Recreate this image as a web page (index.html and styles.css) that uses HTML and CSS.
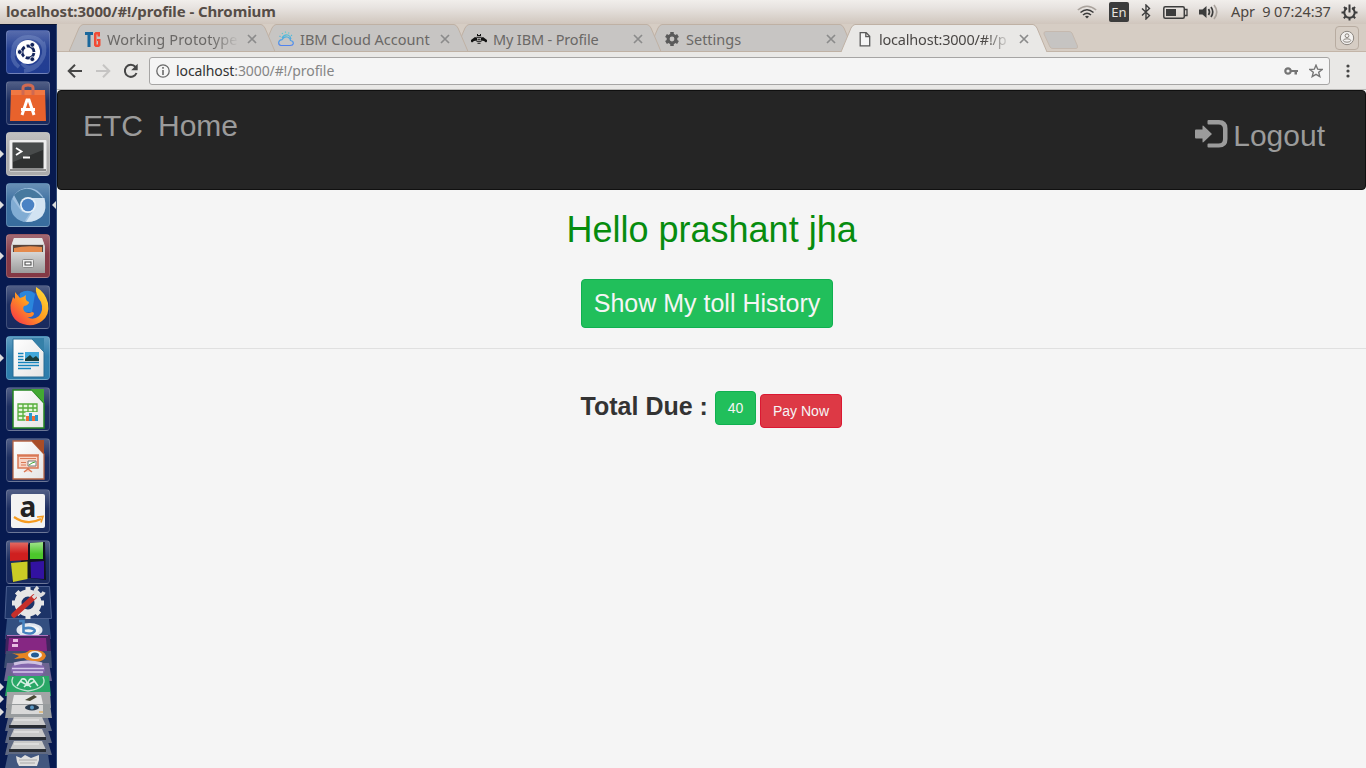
FILE: index.html
```html
<!DOCTYPE html>
<html lang="en">
<head>
<meta charset="utf-8">
<title>localhost:3000/#!/profile</title>
<link rel="stylesheet" href="styles.css">
</head>
<body>
<svg width="0" height="0" class="defs">
  <defs>
    <linearGradient id="paper" x1="0" y1="0" x2="1" y2="1"><stop offset="0" stop-color="#fff"/><stop offset="1" stop-color="#e4e4e4"/></linearGradient>
    <linearGradient id="cloud" x1="0" y1="0" x2="0" y2="1"><stop offset="0" stop-color="#53d1cf"/><stop offset="1" stop-color="#5183ef"/></linearGradient>
    <linearGradient id="fox" x1="1" y1="0" x2="0" y2="1"><stop offset="0" stop-color="#ffe73b"/><stop offset=".5" stop-color="#ff9a20"/><stop offset="1" stop-color="#f6244f"/></linearGradient>
    <linearGradient id="metal" x1="0" y1="0" x2="0" y2="1"><stop offset="0" stop-color="#d6d6d6"/><stop offset="1" stop-color="#9c9c9c"/></linearGradient>
    <linearGradient id="cubeR" x1="0" y1="0" x2="0" y2="1"><stop offset="0" stop-color="#e26a62"/><stop offset=".6" stop-color="#cf1f1f"/></linearGradient>
    <linearGradient id="cubeG" x1="0" y1="0" x2="0" y2="1"><stop offset="0" stop-color="#a2e38d"/><stop offset=".7" stop-color="#4cc72c"/></linearGradient>
    <path id="x" d="M1 1L9 9M9 1L1 9" stroke="#8b8b8b" stroke-width="1.7" fill="none"/>
  </defs>
</svg>
<div class="desktop">
  <header class="panel">
    <span class="panel-title">localhost:3000/#!/profile - Chromium</span>
    <div class="indicators">
      <svg class="wifi" width="20" height="14" viewBox="0 0 20 14" fill="none" stroke-width="1.5"><path d="M.8 5Q10-2.500 19.200 5" stroke="#aaa39d"/><path d="M3.500 7.500Q10 2 16.500 7.500M6 10Q10 6.500 14 10" stroke="#3c3c3c"/><path d="M8 11.500Q10 10 12 11.500L10 13.500Z" fill="#3c3c3c"/></svg>
      <span class="lang">En</span>
      <svg class="bt" width="10" height="16" viewBox="0 0 10 16" fill="none" stroke="#3c3c3c" stroke-width="1.400"><path d="M1 4.500L8.500 11.500L5 15V1L8.500 4.500L1 11.500"/></svg>
      <svg class="battery" width="25" height="13" viewBox="0 0 25 13"><rect x=".8" y=".8" width="20.500" height="11.400" rx="1.500" fill="none" stroke="#3c3c3c" stroke-width="1.500"/><rect x="3" y="3" width="10" height="7" fill="#3c3c3c"/><path d="M22 3.500h2v6h-2" fill="none" stroke="#3c3c3c" stroke-width="1.300"/></svg>
      <svg class="sound" width="20" height="16" viewBox="0 0 20 16" fill="none" stroke-width="1.700"><path d="M0 5.500h3.500L7.500 2v12L3.500 10.500H0z" fill="#3c3c3c"/><path d="M9.500 5Q11.500 8 9.500 11M12 3Q15.500 8 12 13" stroke="#3c3c3c"/><path d="M15 1Q20.500 8 15 15" stroke="#aaa39d"/></svg>
      <time class="clock">Apr&nbsp; 9 07:24:37</time>
      <svg class="power" width="17" height="17" viewBox="-8.500 -8.500 17 17" fill="none" stroke="#3c3c3c"><path d="M-2.500-4.500A5.200 5.200 0 1 0 2.500-4.500" stroke-width="2"/><path d="M0-8V0M5.500-5.500L4-4M8 0H5.500M5.700 5.700L4 4M0 8V5.500M-5.700 5.700L-4 4M-8 0H-5.500M-5.500-5.500L-4-4" stroke-width="2"/></svg>
    </div>
  </header>

  <nav class="launcher">
    <div class="tile t-dash"><svg viewBox="0 0 44 44"><g fill="none" stroke="#91a8d7" stroke-opacity=".32" stroke-width="4"><path d="M8 26C4 12 16 3 32 9M37 12C42 26 32 40 18 41M13 37C2 29 7 14 15 10M24 7C38 8 42 22 34 32M16 33C22 42 34 36 37 26"/></g><circle cx="22" cy="22" r="12" fill="#fff"/><circle cx="22" cy="22" r="6" fill="none" stroke="#14255c" stroke-width="2.800" stroke-dasharray="10.560 2" stroke-dashoffset="-1"/><g fill="#14255c" stroke="#fff" stroke-width=".8"><circle cx="13.700" cy="22" r="2.400"/><circle cx="26.300" cy="14.800" r="2.400"/><circle cx="26.300" cy="29.200" r="2.400"/></g></svg></div>
    <div class="tile t-plain"><svg viewBox="0 0 44 44"><path d="M5 9h34l1 31H4z" fill="#e8622c"/><path d="M5 9h34v5H5z" fill="#f07843"/><path d="M17 14V7q0-3 5-3t5 3v7" fill="none" stroke="#cf6951" stroke-width="3"/><path d="M16 34L21 19h2l5 15M15 28.500h14" fill="none" stroke="#fff" stroke-width="3"/></svg></div>
    <div class="tile t-term running"><svg viewBox="0 0 44 44"><rect x="3.500" y="8" width="37" height="31.500" rx="1" fill="#eee"/><path d="M4 37h36v2H4z" fill="#8c8c8c"/><rect x="6.500" y="10.500" width="31" height="26" fill="#2e3030"/><path d="M7 11h30v7L7 30z" fill="#484b4b"/><path d="M10 16l5.500 3.500-5.500 3.500M17 25.500h7" stroke="#fff" stroke-width="1.800" fill="none"/></svg></div>
    <div class="tile t-chrome running focused"><svg viewBox="0 0 44 44"><circle cx="22" cy="22" r="17" fill="#9fc0e0"/><path d="M8 12Q22-2 37 15H22L15 25z" fill="#47799f"/><path d="M6 15L16 29 24 30 18 39Q1 34 6 15z" fill="#81acd3"/><path d="M38.500 15H26Q31 24 25 31l-5 8Q44 38 38.500 15z" fill="#d2e3f2"/><circle cx="22" cy="22" r="8" fill="#e6f0f9"/><circle cx="22" cy="22" r="6.300" fill="#4a82c4"/></svg></div>
    <div class="tile t-files running"><svg viewBox="0 0 44 44"><path d="M8 4h28l3 8v27H5V12z" fill="#cfcfcf"/><path d="M8 4h28l2 6H6z" fill="#e6e6e6"/><rect x="7" y="11" width="30" height="8" fill="#59443a"/><path d="M8 14q12-3 28-1v6H8z" fill="#e58a4c"/><path d="M5 18h34v21H5z" fill="url(#metal)"/><rect x="16.500" y="25.500" width="11" height="8" rx="1" fill="#eee" stroke="#888"/><rect x="19" y="28" width="6" height="3" fill="#fff" stroke="#444"/></svg></div>
    <div class="tile t-plain"><svg viewBox="0 0 44 44"><circle cx="22" cy="22" r="16" fill="#2361c4"/><path d="M14 8q9-5 15 1l-3 18H14z" fill="#2a86dc"/><path d="M4.500 20L7 12l2 2V7l5 6q4-1 6-3-1 4 1 6l2 1q0 3-5 4-2 3 1 6 4 2 7 0 2 0 2 2-2 4-7 3 6 4 12-1 5-6 2-14-6-8-5-15 9 5 12 16 2 12-6 18-6 5-15 4Q4 37 4.500 20z" fill="url(#fox)"/></svg></div>
    <div class="tile t-writer running"><svg viewBox="0 0 44 44"><path d="M7 3h19l12 13v25H7z" fill="url(#paper)" stroke="#286d94"/><path d="M25 2h13v14z" fill="#3580a8"/><path d="M12 17.500h5.500M12 20.500h5.500M12 23.500h5.500M12 26.500h21M12 29.500h21M12 32.500h13" stroke="#1685bd" stroke-width="1.400"/><rect x="19" y="16" width="14" height="9" fill="#41a8db"/><path d="M19 25v-2l5-4 3 3 3-2 3 3v2z" fill="#193e3c"/></svg></div>
    <div class="tile t-plain"><svg viewBox="0 0 44 44"><path d="M7 3h19l12 13v25H7z" fill="url(#paper)" stroke="#238520" stroke-width="1.500"/><path d="M25 2h13v14z" fill="#43a833"/><path d="M12 17h19v16H12zM12 21h19M12 25h19M12 29h19M17 17v16M22 17v16M27 17v16" stroke="#55ad3a" fill="#e5f7dc" stroke-width="1.300"/><rect x="19.500" y="25" width="12.500" height="9" fill="#eee"/><path d="M20 29h3v5h-3zM26 29h3v5h-3z" fill="#ec6c38"/><path d="M23 26h3v8h-3zM29 28h3v6h-3z" fill="#2798ce"/></svg></div>
    <div class="tile t-plain"><svg viewBox="0 0 44 44"><path d="M7 3h19l12 13v25H7z" fill="url(#paper)" stroke="#b76545" stroke-width="1.300"/><path d="M25 2h13v14z" fill="#a84d27"/><path d="M12 18h20v12H12zM18 34l4-3 4 3M11 17h22" stroke="#d97855" fill="#f9d5c6" stroke-width="1.500"/><path d="M14 20.500h16M15 24.500h5M15 27h5" stroke="#d97855"/><path d="M22 23h8v5h-8z" fill="#fff" stroke="#777"/><path d="M23 27l3-2 3-1" stroke="#43a833" fill="none"/></svg></div>
    <div class="tile t-plain"><svg viewBox="0 0 44 44"><rect x="5" y="5" width="34" height="34" rx="2" fill="#f3f3f3"/><text x="13.500" y="28" class="amz">a</text><path d="M8 28q13 9 27 2" fill="none" stroke="#f59b20" stroke-width="2.200"/><path d="M31 28l6-.5-2 6" fill="none" stroke="#f59b20" stroke-width="1.600"/></svg></div>
    <div class="tile t-plain"><svg viewBox="0 0 44 44"><path d="M23 3l16-1 1 38-17-2-17 4z" fill="#101421"/><path d="M4 2.500h18V20L4 21z" fill="url(#cubeR)"/><path d="M24 3l13-1v17H24z" fill="url(#cubeG)"/><path d="M5 23l16.500-1.500V39L7 42z" fill="#cbcb25"/><path d="M24.500 22l13.500-1v18l-13-1z" fill="#3212a1"/></svg></div>
    <svg class="stack" viewBox="0 0 57 184">
      <path d="M6.500 2.500h43l2 32H5z" fill="#1d3468" stroke="#4c6090"/>
      <g transform="translate(28 19)"><circle r="10" fill="none" stroke="#e6e6e6" stroke-width="7"/><path d="M-2.500-13h5M-2.500 13h5M-13-2.500v5M13-2.500v5M-11-7.500l3.500-3.500M11 7.500l-3.500 3.500M-11 7.500l3.500 3.500M11-7.500l-3.500-3.500" stroke="#e6e6e6" stroke-width="6"/><path d="M-14 12L6-6" stroke="#c62f2a" stroke-width="5.500" stroke-linecap="round"/><path d="M5-5l5-5M10-16q-5 5-1 7 5 3 7-2" stroke="#ddd" stroke-width="3.500" fill="none"/></g>
      <path d="M7 35h42l2 20H5z" fill="#334f80"/><ellipse cx="29.500" cy="46" rx="13" ry="7" fill="#dfe6ee"/><ellipse cx="29.500" cy="46" rx="10" ry="4.500" fill="#f3f5f7"/><path d="M19 37h4.500v11q4 2.500 9 1 4-2 1-4-4-2-10-.5" fill="none" stroke="#4582bd" stroke-width="2.600"/>
      <path d="M6 51h44l1 19H5z" fill="#41245e"/><path d="M9 54h37l1 13H8z" fill="#862783"/><path d="M13 55h5v3h-5zM12 60h6v3h-6z" fill="#e9bde2"/><path d="M7 51.500h41" stroke="#af74bd"/>
      <path d="M6 67h45l1 17H4z" fill="#405172" fill-opacity=".9"/><path d="M12 69q13 2 18-3 15-1 16 6-3 8-16 5-4-1-6-3l-10 1 5-3z" fill="#e88522"/><ellipse cx="35" cy="71" rx="7" ry="4" fill="#eee"/><ellipse cx="35" cy="71" rx="4" ry="2.500" fill="#255b93"/>
      <path d="M7 79h42l3 18H4z" fill="#6d6591"/><ellipse cx="28" cy="85.500" rx="17" ry="9" fill="#8467ae"/><path d="M12 84.500h32M13 88h30" stroke="#d7c9eb" stroke-width="1.400"/><path d="M14 80q14-4 28 0" stroke="#cdc0e0" stroke-width="3" fill="none"/>
      <path d="M8 92h41l2 20H5z" fill="#29a766"/><path d="M13 93q-5 11 15 14 20-3 15-14" fill="none" stroke="#b9e2ce" stroke-width="1.400"/><path d="M17 102l5-7q5-1 5 6l-7-4M38 102l-5-7q-5-1-5 6l7-4M24 103q3-4 7 0" fill="none" stroke="#d6f0e3" stroke-width="1.500"/>
      <path d="M7 108h43l1 16H6z" fill="#a3a4a6"/><path d="M14 111h27l2 9H12z" fill="#e6e6e6"/><path d="M25 116l9-5 3 2-7 4z" fill="#494a35"/>
      <path d="M7 120h43l2 14H5z" fill="#989c9e"/><path d="M12 121h31v9H11z" fill="#d8d8d8"/><ellipse cx="32" cy="123.500" rx="7" ry="3" fill="#26394d"/><circle cx="32" cy="123.500" r="2" fill="#5a98c4"/><path d="M39 128h4" stroke="#e3a33a"/>
      <g id="drive"><path d="M8 134h40l4 13H5z" fill="#606a82"/><path d="M14 133h28l4 9H10z" fill="#c9c9c9"/><path d="M9 141h37v3H9z" fill="#292d34"/><path d="M14 136h25" stroke="#eee"/></g>
      <use href="#drive" y="12"/><use href="#drive" y="24"/>
      <path d="M8 170h40l2 14H5z" fill="#42577f"/><path d="M16 172l5 2 4-3 6 3 8-3v5l-2 6H19l-2-4z" fill="#dedede"/><path d="M19 176h18M20 179h15" stroke="#aaa"/>
      <g fill="#ddd"><path d="M0 99l4 4-4 4zM0 111l4 4-4 4zM0 124l4 4-4 4z"/></g>
    </svg>
  </nav>

  <main class="browser">
    <div class="tabstrip">
      <div class="tab z4"><svg class="shape" viewBox="0 0 206 28"><path d="M0 27.500L10 4Q12 .5 14 .5H192Q194 .5 196 4L206 27.500z"/></svg><svg class="fav" viewBox="0 0 16 16"><path d="M0 1h8v3H5.500v12h-3V4H0z" fill="#19679c"/><path d="M9 2.500L10.500 1H15v4.500h-2.500V3.500h-1v10h1.500V10H12V8h3.500v6.500L14 16h-3.500L9 14.500z" fill="#f24b35"/></svg><span class="label fade l1">Working Prototype</span><svg class="close" viewBox="0 0 10 10"><use href="#x"/></svg></div>
      <div class="tab z3"><svg class="shape" viewBox="0 0 206 28"><path d="M0 27.500L10 4Q12 .5 14 .5H192Q194 .5 196 4L206 27.500z"/></svg><svg class="fav" viewBox="0 0 16 16" fill="none" stroke="url(#cloud)" stroke-width="1.200"><path d="M3 14.500Q.5 14 .7 11.500 1 9 4 8.700 6 5 9.500 6 12.500 7 12.500 9.500 15.500 10 15.300 12.500 15 14.500 12 14.500zM4 7Q6 3 10 4 12.500 5 13 8M1.500 5l1 .7M4 2l.7 1M7.500.5v1.300M11 1.500l-.5 1M14 4l-1 .8"/></svg><span class="label l2">IBM Cloud Account</span><svg class="close" viewBox="0 0 10 10"><use href="#x"/></svg></div>
      <div class="tab z2"><svg class="shape" viewBox="0 0 206 28"><path d="M0 27.500L10 4Q12 .5 14 .5H192Q194 .5 196 4L206 27.500z"/></svg><svg class="fav" viewBox="0 0 16 16"><path d="M0 10.500V9l4-3 2 1v2.500L3 10l-2 1.500zM16 10.500V9l-4-3-2 1v2.500l3 .5 2 1.500zM6 3h1v1h2V3h1v2H6zM5.500 5.800h5v1h-5zM6.500 7.800h3v1h-3zM5.500 9.800h5v1h-5zM6.500 11.800h3v1h-3z" fill="#111"/></svg><span class="label l3">My IBM - Profile</span><svg class="close" viewBox="0 0 10 10"><use href="#x"/></svg></div>
      <div class="tab z1"><svg class="shape" viewBox="0 0 206 28"><path d="M0 27.500L10 4Q12 .5 14 .5H192Q194 .5 196 4L206 27.500z"/></svg><svg class="fav" viewBox="-8 -8 16 16"><g fill="none" stroke="#5a5a5a"><circle r="3.900" stroke-width="3"/><path d="M0-7V-4M0 7V4M-6-3.500L-3.500-2M6 3.500L3.500 2M-6 3.500L-3.500 2M6-3.500L3.500-2" stroke-width="3.500"/></g></svg><span class="label l4">Settings</span><svg class="close" viewBox="0 0 10 10"><use href="#x"/></svg></div>
      <div class="tab active"><svg class="shape" viewBox="0 0 206 28"><path d="M0 28L10 4Q12 .5 14 .5H192Q194 .5 196 4L206 28"/></svg><svg class="fav" viewBox="0 0 16 16"><path d="M3.200 1.700h6l3.500 3.500v9.600H3.200zM8.800 1.700v4h4" fill="#f5f5f5" stroke="#5a5a5a" stroke-width="1.300"/></svg><span class="label fade l5">localhost:3000/#!/p</span><svg class="close" viewBox="0 0 10 10"><use href="#x"/></svg></div>
      <svg class="newtab" viewBox="0 0 36 18"><path d="M3 .5H26Q28 .5 29 2L34.500 15Q35 17.500 33 17.500H10Q8 17.500 7 16L1 3Q.5 .5 3 .5z" fill="#c6c4c2" stroke="#c5b9af"/></svg>
      <span class="profile"><svg viewBox="0 0 16 16"><circle cx="8" cy="8" r="6.700" fill="#f2f0ee" stroke="#8b857f"/><circle cx="8" cy="5.700" r="1.900" fill="none" stroke="#8b857f"/><ellipse cx="8" cy="10.500" rx="3.700" ry="1.700" fill="none" stroke="#8b857f"/></svg></span>
    </div>
    <div class="toolbar">
      <svg class="nav-icon back" viewBox="0 0 16 16"><path d="M15 8H2M8 1.700L1.700 8 8 14.300" fill="none" stroke="#464646" stroke-width="2"/></svg>
      <svg class="nav-icon fwd" viewBox="0 0 16 16"><path d="M1 8H14M8 1.700L14.300 8 8 14.300" fill="none" stroke="#c5c4c3" stroke-width="2"/></svg>
      <svg class="nav-icon reload" viewBox="0 0 16 16"><path d="M13.500 10A6 6 0 1 1 12.500 4" fill="none" stroke="#464646" stroke-width="2"/><path d="M14.700.8v6.500H8.200z" fill="#464646"/></svg>
      <div class="omnibox">
        <svg class="info" viewBox="0 0 14 14"><circle cx="7" cy="7" r="6.200" fill="none" stroke="#696969" stroke-width="1.300"/><path d="M7 3v1.700M7 6v5" stroke="#696969" stroke-width="1.600"/></svg>
        <span class="url">localhost<span class="rest">:3000/#!/profile</span></span>
        <svg class="key" viewBox="0 0 14 8"><circle cx="4" cy="4" r="2.700" fill="none" stroke="#757575" stroke-width="2.200"/><path d="M7 3h7v2h-1v2.500h-2.500V5H7z" fill="#757575"/></svg>
        <svg class="star" viewBox="0 0 14 14"><path d="M7 1.200l1.700 4 4.400.3-3.400 2.800 1.100 4.300L7 10.300l-3.800 2.300 1.100-4.300L.9 5.500l4.400-.3z" fill="none" stroke="#757575" stroke-width="1.400"/></svg>
      </div>
      <svg class="menu" viewBox="0 0 4 14"><g fill="#464646"><circle cx="2" cy="2" r="1.600"/><circle cx="2" cy="7" r="1.600"/><circle cx="2" cy="12" r="1.600"/></g></svg>
    </div>
    <section class="page">
      <div class="navbar">
        <a class="nav-link">ETC</a><a class="nav-link">Home</a>
        <a class="logout"><svg viewBox="0 0 32 28"><path d="M1 9.500h6.500V6.500q0-1.500 1.200-.5l8.300 8-8.300 8q-1.200 1-1.200-.5V18.500H1q-1 0-1-1v-7q0-1 1-1z"/><path d="M13.500 0H24q8.500 0 8.500 8.500v10.500q0 8.500-8.500 8.500H13.500q-1 0-1-1v-2q0-1 1-1H23.500q4.500 0 4.500-4.500v-10q0-4.500-4.500-4.500H13.500q-1 0-1-1V1q0-1 1-1z"/></svg><span>Logout</span></a>
      </div>
      <h1 class="hello">Hello prashant jha</h1>
      <button class="btn history">Show My toll History</button>
      <hr class="rule">
      <div class="due"><strong>Total Due :</strong><button class="btn amount">40</button><button class="btn pay">Pay Now</button></div>
    </section>
  </main>
</div>
</body>
</html>
```
FILE: styles.css
```css
* { box-sizing: border-box; }
body { margin: 0; width: 1366px; height: 768px; overflow: hidden; background: #f5f5f5; }
svg { display: block; flex: none; }
.defs { position: absolute; }
.desktop { display: grid; grid-template: 24px 744px / 57px 1309px; font-family: "Noto Sans", sans-serif; }
.panel { grid-column: 1 / 3; display: flex; align-items: center; justify-content: space-between; padding: 0 8px 0 6px; background: linear-gradient(#f1eeeb, #e8e4e1 30%, #d0c6bd); color: #564d47; white-space: nowrap; }
.panel-title { margin-top: -2px; font-size: 15px; line-height: 20px; font-weight: 700; letter-spacing: -.1px; }
.indicators { display: flex; align-items: center; }
.lang { width: 20px; height: 20px; margin: 0 12px; border-radius: 2px; background: #3c3c3c; color: #e9e4df; font-size: 13px; line-height: 20px; text-align: center; }
.battery { margin-left: 12px; }
.sound { margin-left: 11px; }
.clock { width: 98px; margin: -2px 12px 0; font-size: 14.500px; line-height: 20px; letter-spacing: -.1px; color: #4c4641; }

.launcher { display: flex; flex-direction: column; align-items: center; gap: 7px; padding-top: 5px; height: 744px; background: #071a50; border-right: 1px solid #344c78; border-top: 1px solid #0a1432; overflow: hidden; }
.tile { position: relative; flex: none; width: 44px; height: 44px; margin-right: 1px; border-radius: 4px; border: 1px solid rgba(255,255,255,.16); background-image: linear-gradient(rgba(255,255,255,.26), rgba(255,255,255,.04) 45%, rgba(255,255,255,.02)); }
.tile > svg { width: 44px; height: 44px; margin: -1px; }
.t-dash { background-color: #1d3990; }
.t-plain { background-color: #14265b; }
.t-term { background-color: #aaa; }
.t-chrome { background-color: #34699c; }
.t-files { background-color: #813441; }
.t-writer { background-color: #287aaa; }
.running::before { content: ""; position: absolute; left: -7px; top: 17px; border: 4px solid transparent; border-left-color: #ddd; border-right: 0; }
.focused::after { content: ""; position: absolute; right: -7px; top: 17px; border: 4px solid transparent; border-right-color: #ddd; border-left: 0; }
.amz { font: 700 28px "Noto Sans", sans-serif; fill: #222; }
.stack { width: 57px; height: 184px; margin-top: -7px; }

.browser { display: flex; flex-direction: column; }
.tabstrip { display: flex; height: 28px; padding-left: 12px; background: #d6cdc4; box-shadow: inset 0 -1px #c3b5a8; }
.tab { position: relative; display: flex; align-items: center; flex: none; width: 206px; height: 28px; margin-right: -13px; padding: 2px 18px 0 16px; color: #6a6866; }
.tab > :not(.shape) { position: relative; }
.shape { position: absolute; left: 0; top: 0; width: 206px; height: 28px; fill: #c7c5c3; stroke: #bfb1a4; }
.z4 { z-index: 4; } .z3 { z-index: 3; } .z2 { z-index: 2; } .z1 { z-index: 1; }
.active { z-index: 5; color: #4b4846; margin-right: 0; }
.active .shape { fill: #e9e8e6; }
.fav { width: 16px; height: 16px; }
.label { flex: none; width: 132px; margin-left: 6px; overflow: hidden; white-space: nowrap; font-size: 14.500px; line-height: 22px; letter-spacing: 0; }
.l1 { letter-spacing: .15px; }
.l3 { letter-spacing: -.15px; }
.l5 { letter-spacing: -.2px; }
.fade { -webkit-mask-image: linear-gradient(90deg, #000 80%, transparent); mask-image: linear-gradient(90deg, #000 80%, transparent); }
.close { width: 10px; height: 10px; margin-left: 8px; }
.newtab { width: 36px; height: 18px; margin: 7px 0 0 -4px; }
.profile { display: flex; align-items: center; justify-content: center; width: 24px; height: 24px; margin: 2px 7px 0 auto; border: 1px solid #b8aca1; border-radius: 4px; }
.profile svg { width: 16px; height: 16px; }
.toolbar { display: flex; align-items: center; height: 38px; padding-left: 10px; background: #e9e8e6; border-bottom: 1px solid #b9b8b6; }
.nav-icon { width: 16px; height: 16px; margin-right: 12px; }
.reload { margin-right: 10px; }
.omnibox { display: flex; align-items: center; width: 1181px; height: 28px; padding: 0 6px; background: #f5f5f5; border: 1px solid #a6a5a4; border-radius: 3px; }
.info { width: 14px; height: 14px; }
.url { flex: 1; margin-left: 6px; font-size: 14px; line-height: 20px; color: #333; letter-spacing: -.1px; }
.rest { color: #858585; }
.key { width: 14px; height: 8px; margin-right: 11px; }
.star { width: 14px; height: 14px; }
.menu { width: 4px; height: 14px; margin-left: 16px; }

.page { display: flex; flex-direction: column; height: 678px; background: #f5f5f5; font-family: "Liberation Sans", sans-serif; }
.navbar { display: flex; align-items: flex-start; flex: none; height: 100px; padding: 18px 40px 0 25px; gap: 15px; background: #252525; border: 1px solid #101010; border-radius: 4px; color: #9b9b9b; font-size: 30px; line-height: 34px; }
.logout { display: flex; margin: 10px 0 0 auto; gap: 6px; }
.logout svg { width: 32px; height: 28px; margin-top: 1px; fill: #9b9b9b; overflow: visible; }
.hello { margin: 20px 0 0 509.500px; font-size: 36px; line-height: 40px; font-weight: 500; color: #078c0e; }
.btn { flex: none; padding: 0; border: 1px solid #10b050; border-radius: 4px; background: #21bf5b; color: #f5f5f5; font-family: inherit; }
.history { width: 252px; height: 49px; margin: 29px 0 0 524px; font-size: 25px; }
.rule { width: 100%; height: 1px; margin: 20px 0 42px; border: 0; background: #e0e0e0; }
.due { display: flex; align-items: flex-start; padding-left: 523.600px; color: #333; font-size: 25px; }
.due strong { width: 134.400px; line-height: 30px; white-space: nowrap; }
.amount { width: 41px; height: 34px; font-size: 14px; }
.pay { width: 82px; height: 34px; margin: 3px 0 0 4px; font-size: 14px; border-color: #db1832; background: #dd3945; }
```
